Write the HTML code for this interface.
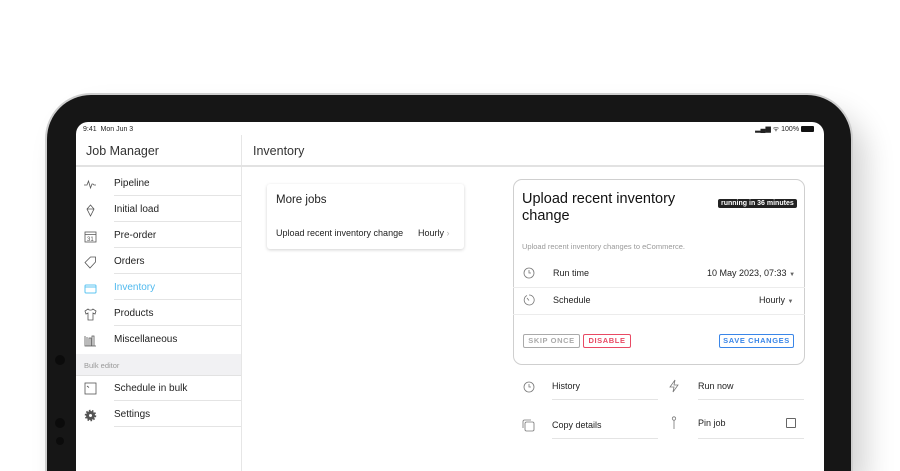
<!DOCTYPE html>
<html><head><style>
*{margin:0;padding:0;box-sizing:border-box}
html,body{width:900px;height:471px;overflow:hidden}
body{background:#fff;font-family:"Liberation Sans",sans-serif;color:#222}
#w{position:relative;width:900px;height:471px;overflow:hidden}
.a{position:absolute}
.bezel{left:47px;top:95px;width:804px;height:376px;background:#161616;border-radius:44px 44px 0 0;box-shadow:0 0 0 2px #cfcfcf,14px 18px 30px rgba(0,0,0,.18)}
.screen{left:76px;top:122px;width:748px;height:349px;background:#fff;border-radius:12px 12px 0 0;overflow:hidden}
.t{font-size:10px;position:absolute;white-space:nowrap}
.item{position:absolute;left:38px;font-size:10px}
.sep{position:absolute;left:38px;width:127px;height:1px;background:#e4e4e4}
.ic{position:absolute;left:8px;width:13px;height:13px}
.btn{position:absolute;height:14px;border:1.3px solid;border-radius:2px;font-size:7.5px;letter-spacing:.6px;text-align:center;line-height:12px;font-weight:bold}
</style></head><body><div id="w">
<div class="a" style="left:104px;top:93px;width:28px;height:2px;background:#ccc"></div>
<div class="a" style="left:138px;top:93px;width:28px;height:2px;background:#ccc"></div>
<div class="a bezel"></div>
<div class="a" style="left:55px;top:355px;width:10px;height:10px;border-radius:50%;background:#0b0b0b"></div>
<div class="a" style="left:55px;top:418px;width:10px;height:10px;border-radius:50%;background:#0b0b0b"></div>
<div class="a" style="left:56px;top:437px;width:8px;height:8px;border-radius:50%;background:#0b0b0b"></div>
<div class="a screen">
 <div class="t" style="left:7px;top:4px;font-size:7px">9:41&nbsp; Mon Jun 3</div>
 <div class="t" style="right:10px;top:3px;font-size:7px">▂▄▆ ᯤ 100% <span style="display:inline-block;width:13px;height:6px;background:#111;border-radius:1px;vertical-align:middle"></span></div>
 <div class="a" style="left:165px;top:13px;width:1px;height:360px;background:#e6e6e6"></div>
 <div class="a" style="left:0;top:43px;width:748px;height:2px;background:#e2e2e2"></div>
 <div class="t" style="left:10px;top:22px;font-size:12.5px;color:#333">Job Manager</div>
 <div class="t" style="left:177px;top:22px;font-size:12.5px;color:#333">Inventory</div>

 <svg class="ic" style="top:56px" viewBox="0 0 13 13"><path d="M0 7h3l1.5-4 2 7 1.5-4h1l1 1h2" fill="none" stroke="#555" stroke-width=".8"/></svg>
 <div class="item" style="top:56px">Pipeline</div><div class="sep" style="top:73px"></div>
 <svg class="ic" style="top:82px" viewBox="0 0 13 13"><path d="M6.5 1L3 5l3.5 7L10 5z M3 5h7" fill="none" stroke="#555" stroke-width=".8"/></svg>
 <div class="item" style="top:82px">Initial load</div><div class="sep" style="top:99px"></div>
 <svg class="ic" style="top:108px" viewBox="0 0 13 13"><rect x="1" y="2" width="11" height="10" fill="none" stroke="#555" stroke-width=".8"/><path d="M1 4.5h11" stroke="#555" stroke-width=".8"/><text x="3" y="11" font-size="6" fill="#555" font-family="Liberation Sans">31</text></svg>
 <div class="item" style="top:108px">Pre-order</div><div class="sep" style="top:125px"></div>
 <svg class="ic" style="top:134px" viewBox="0 0 13 13"><path d="M1 6.5L6.5 1h5v5L6 12z" fill="none" stroke="#555" stroke-width=".8"/></svg>
 <div class="item" style="top:134px">Orders</div><div class="sep" style="top:151px"></div>
 <svg class="ic" style="top:160px" viewBox="0 0 13 13"><rect x="1" y="3" width="11" height="8" rx="1" fill="none" stroke="#5ec4f2" stroke-width="1"/><path d="M1 5h11" stroke="#5ec4f2"/></svg>
 <div class="item" style="top:160px;color:#4fb9ee">Inventory</div><div class="sep" style="top:177px"></div>
 <svg class="ic" style="top:186px" viewBox="0 0 13 13"><path d="M4 1L1 3l1 3 2-1v7h5V5l2 1 1-3-3-2c-1 1.5-4 1.5-5 0z" fill="none" stroke="#555" stroke-width=".8"/></svg>
 <div class="item" style="top:186px">Products</div><div class="sep" style="top:203px"></div>
 <svg class="ic" style="top:212px" viewBox="0 0 13 13"><path d="M1 2v10h11M3 3v9M5 4h2v8H5zM8 2h2v10H8z" fill="none" stroke="#555" stroke-width=".8"/></svg>
 <div class="item" style="top:212px">Miscellaneous</div>
 <div class="a" style="left:0;top:232px;width:165px;height:22px;background:#f1f1f3;border-bottom:1px solid #e2e2e2"></div>
 <div class="t" style="left:8px;top:239px;font-size:7.5px;color:#999">Bulk editor</div>
 <svg class="ic" style="top:260px" viewBox="0 0 13 13"><rect x="1" y="1" width="11" height="11" fill="none" stroke="#555" stroke-width=".8"/><path d="M3 4l2 1.5" stroke="#555" stroke-width=".8"/></svg>
 <div class="item" style="top:261px">Schedule in bulk</div><div class="sep" style="top:278px"></div>
 <svg class="ic" style="top:287px" viewBox="0 0 13 13"><circle cx="6.5" cy="6.5" r="4.5" fill="#555" stroke="#555" stroke-width="2.5" stroke-dasharray="1.5 1.3"/><circle cx="6.5" cy="6.5" r="1.5" fill="#fff"/></svg>
 <div class="item" style="top:287px">Settings</div><div class="sep" style="top:304px"></div>

 <div class="a" style="left:191px;top:62px;width:197px;height:65px;background:#fff;border-radius:3px;box-shadow:0 1px 3px rgba(0,0,0,.18)"></div>
 <div class="t" style="left:200px;top:72px;font-size:11.5px">More jobs</div>
 <div class="t" style="left:200px;top:106px;font-size:9px">Upload recent inventory change</div>
 <div class="t" style="left:342px;top:106px;font-size:9px">Hourly <span style="color:#bbb">›</span></div>

 <div class="a" style="left:437px;top:57px;width:292px;height:186px;border:1px solid #cfcfcf;border-radius:9px"></div>
 <div class="t" style="left:446px;top:69px;font-size:14.5px;line-height:17px;white-space:normal;width:180px;color:#111">Upload recent inventory change</div>
 <div class="t" style="left:642px;top:77px;font-size:7px;font-weight:bold;color:#fff;background:#222;padding:1px 3px;border-radius:2px">running in 36 minutes</div>
 <div class="t" style="left:446px;top:120px;font-size:7.5px;color:#999">Upload recent inventory changes to eCommerce.</div>
 <svg class="a" style="left:447px;top:145px" width="12" height="12" viewBox="0 0 12 12"><circle cx="6" cy="6" r="5" fill="none" stroke="#777" stroke-width=".8"/><path d="M6 3v3h2" fill="none" stroke="#777" stroke-width=".8"/></svg>
 <div class="t" style="left:477px;top:146px;font-size:9px">Run time</div>
 <div class="t" style="left:631px;top:146px;font-size:9px">10 May 2023, 07:33 <span style="font-size:6px;color:#666">▼</span></div>
 <div class="a" style="left:437px;top:165px;width:292px;height:1px;background:#ececec"></div>
 <svg class="a" style="left:447px;top:172px" width="12" height="12" viewBox="0 0 12 12"><path d="M4 1.5A5 5 0 1 0 6 1" fill="none" stroke="#777" stroke-width=".8"/><path d="M4 4l2 2.5" stroke="#777" stroke-width=".8"/></svg>
 <div class="t" style="left:477px;top:173px;font-size:9px">Schedule</div>
 <div class="t" style="left:683px;top:173px;font-size:9px">Hourly <span style="font-size:6px;color:#666">▼</span></div>
 <div class="a" style="left:437px;top:192px;width:292px;height:1px;background:#ececec"></div>
 <div class="btn" style="left:447px;top:212px;width:57px;border-color:#aaa;color:#aaa">SKIP ONCE</div>
 <div class="btn" style="left:507px;top:212px;width:48px;border-color:#e84a64;color:#e84a64">DISABLE</div>
 <div class="btn" style="left:643px;top:212px;width:75px;border-color:#3a86e8;color:#3a86e8">SAVE CHANGES</div>

 <svg class="a" style="left:447px;top:259px" width="12" height="12" viewBox="0 0 12 12"><circle cx="6" cy="6" r="5" fill="none" stroke="#777" stroke-width=".8"/><path d="M6 3v3h2" fill="none" stroke="#777" stroke-width=".8"/></svg>
 <div class="t" style="left:476px;top:259px;font-size:9px">History</div>
 <div class="a" style="left:476px;top:277px;width:106px;height:1px;background:#e4e4e4"></div>
 <svg class="a" style="left:592px;top:257px" width="12" height="14" viewBox="0 0 12 14"><path d="M7 1L2 8h4l-1 5 5-7H6z" fill="none" stroke="#777" stroke-width=".8"/></svg>
 <div class="t" style="left:622px;top:259px;font-size:9px">Run now</div>
 <div class="a" style="left:622px;top:277px;width:106px;height:1px;background:#e4e4e4"></div>
 <svg class="a" style="left:446px;top:297px" width="13" height="13" viewBox="0 0 13 13"><rect x="3" y="3" width="9" height="9" rx="1.5" fill="none" stroke="#777" stroke-width=".8"/><path d="M1 9V2.5A1.5 1.5 0 0 1 2.5 1H9" fill="none" stroke="#777" stroke-width=".8"/></svg>
 <div class="t" style="left:476px;top:298px;font-size:9px">Copy details</div>
 <div class="a" style="left:476px;top:316px;width:106px;height:1px;background:#e4e4e4"></div>
 <svg class="a" style="left:594px;top:294px" width="8" height="14" viewBox="0 0 8 14"><circle cx="4" cy="2.5" r="1.7" fill="none" stroke="#777" stroke-width=".8"/><path d="M4 4.2V13" stroke="#777" stroke-width=".8"/></svg>
 <div class="t" style="left:622px;top:296px;font-size:9px">Pin job</div>
 <div class="a" style="left:710px;top:296px;width:10px;height:10px;border:1px solid #666;border-radius:1px"></div>
 <div class="a" style="left:622px;top:316px;width:106px;height:1px;background:#e4e4e4"></div>
</div>
</div></body></html>
